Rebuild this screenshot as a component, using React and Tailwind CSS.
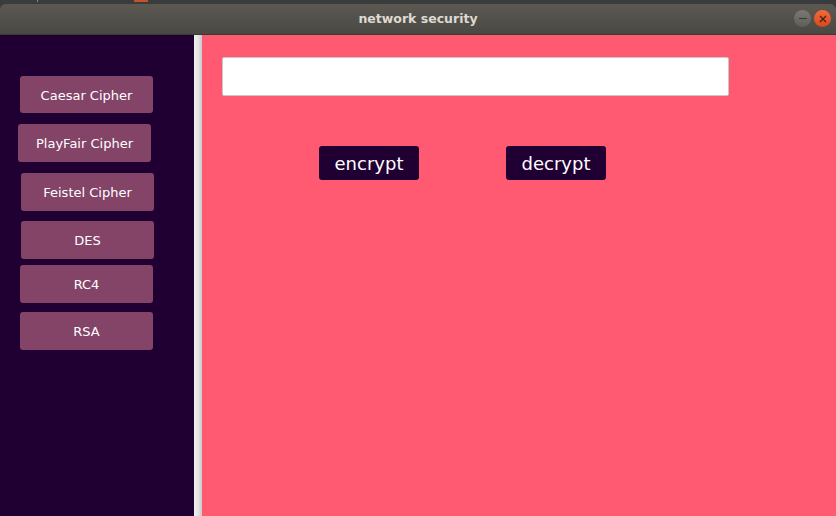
export default function App() {
  const items = [
    { label: "Caesar Cipher", ml: "ml-[20px]", mt: "mt-[41px]", h: "h-[37px]" },
    { label: "PlayFair Cipher", ml: "ml-[18px]", mt: "mt-[11px]", h: "h-[38px]" },
    { label: "Feistel Cipher", ml: "ml-[21px]", mt: "mt-[11px]", h: "h-[38px]" },
    { label: "DES", ml: "ml-[21px]", mt: "mt-[10px]", h: "h-[38px]" },
    { label: "RC4", ml: "ml-[20px]", mt: "mt-[6px]", h: "h-[38px]" },
    { label: "RSA", ml: "ml-[20px]", mt: "mt-[9px]", h: "h-[38px]" },
  ];
  return (
    <div className="w-[836px] h-[516px] flex flex-col overflow-hidden bg-[#3c3d3f] font-['DejaVu_Sans',sans-serif]">
      {/* top panel strip */}
      <div className="h-[4px] flex items-start bg-[#3a3b3d]">
        <div className="ml-[37px] w-[1px] h-[2px] bg-[#8a8a8a]" />
        <div className="ml-[96px] w-[14px] h-[2px] bg-[#c2542a]" />
      </div>
      {/* title bar */}
      <div className="h-[31px] flex items-center relative rounded-t-[6px] bg-gradient-to-b from-[#5c5953] to-[#4a4843] border-b border-[#3a3936]">
        <div className="flex-1 text-center text-[12.5px] font-bold text-[#dedad2]">network security</div>
        <div className="absolute right-[5px] top-[6px] flex gap-[3px]">
          <div className="w-[17px] h-[17px] rounded-full bg-gradient-to-b from-[#7a7973] to-[#5e5d58] flex items-center justify-center">
            <div className="w-[8px] h-[1.5px] bg-[#3a3936]" />
          </div>
          <div className="w-[17px] h-[17px] rounded-full bg-gradient-to-b from-[#f06b3b] to-[#d9461e] flex items-center justify-center">
            <svg width="8" height="8" viewBox="0 0 8 8">
              <path d="M1 1L7 7M7 1L1 7" stroke="#4a2010" strokeWidth="1.3" />
            </svg>
          </div>
        </div>
      </div>
      {/* content */}
      <div className="flex-1 flex">
        <div className="w-[194px] bg-[#200032] flex flex-col">
          {items.map((it) => (
            <div
              key={it.label}
              className={`${it.ml} ${it.mt} ${it.h} w-[133px] rounded-[3px] bg-[#834468] flex items-center justify-center pt-[2px] text-[13px] text-white`}
            >
              {it.label}
            </div>
          ))}
        </div>
        <div className="w-[8px] bg-gradient-to-r from-[#f0f0f0] via-[#e6e6e6] to-[#c9c9c9]" />
        <div className="flex-1 bg-[#ff5a72] flex flex-col">
          <div className="ml-[20px] mt-[22px] w-[507px] h-[39px] bg-white rounded-[2px] border border-[#c8c8c8]" />
          <div className="flex mt-[50px] ml-[117px] gap-[87px]">
            <div className="w-[100px] h-[34px] rounded-[3px] bg-[#200032] flex items-center justify-center text-[18px] text-white">
              encrypt
            </div>
            <div className="w-[100px] h-[34px] rounded-[3px] bg-[#200032] flex items-center justify-center text-[18px] text-white">
              decrypt
            </div>
          </div>
        </div>
      </div>
    </div>
  );
}
